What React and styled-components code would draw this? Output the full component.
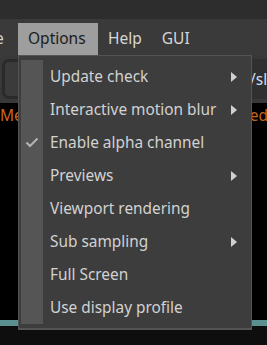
import React from 'react';
import styled, { createGlobalStyle } from 'styled-components';

const GlobalStyle = createGlobalStyle`
  html, body {
    margin: 0;
    padding: 0;
    background: #0e0e0e;
  }
  body {
    font-family: "Noto Sans", "Open Sans", sans-serif;
  }
`;

const Screen = styled.div`
  position: relative;
  width: 267px;
  height: 345px;
  overflow: hidden;
  display: flex;
  flex-direction: column;
  background: #0e0e0e;
`;

const TitleStrip = styled.div`
  height: 19px;
  background: #2d2d2d;
`;

const MenuBar = styled.div`
  height: 36px;
  background: #3a3a3a;
  display: flex;
  align-items: stretch;
  margin-left: -31px;
`;

const MenuTitle = styled.div`
  box-sizing: border-box;
  display: flex;
  align-items: center;
  padding: 0 10px 3px;
  margin-top: 4px;
  font-size: 15.5px;
  color: ${p => (p.$open ? '#1c1c1c' : '#d6d6d6')};
  background: ${p => (p.$open ? '#9e9e9e' : 'transparent')};
  width: ${p => (p.$w ? `${p.$w}px` : 'auto')};
`;

const Toolbar = styled.div`
  height: 48px;
  background: #383838;
  display: flex;
  align-items: center;
  gap: 8px;
  padding: 0 0 0 2px;
`;

const ToolButton = styled.div`
  width: 110px;
  height: 34px;
  border: 3px solid #2a2a2a;
  border-radius: 7px;
  background: #3b3b3b;
`;

const PathField = styled.div`
  flex: 1;
  height: 40px;
  background: #303030;
  display: flex;
  align-items: center;
  padding-left: 124px;
  white-space: nowrap;
  overflow: hidden;
  font-size: 15.5px;
  color: #d4dcef;
`;

const Console = styled.div`
  flex: 1;
  background: #000;
  display: flex;
  justify-content: space-between;
  padding-top: 1px;
  font-size: 15.5px;
  color: #c9661a;
  white-space: nowrap;
  overflow: hidden;
`;

const LogText = styled.span`
  margin-right: ${p => p.$tail || 0}px;
`;

const StatusLine = styled.div`
  height: 6px;
  background: #5a9090;
`;

const BottomBar = styled.div`
  height: 19px;
  background: #0e0e0e;
`;

const Dropdown = styled.div`
  position: absolute;
  left: 18px;
  top: 55px;
  width: 228px;
  padding: 4px 2px 4px 2px;
  background: #3d3d3d;
  border: 1px solid #545454;
  border-bottom-width: 2px;
`;

const Item = styled.div`
  display: grid;
  grid-template-columns: 22px 1fr 24px;
  height: 33px;
  align-items: stretch;
  font-size: 15.4px;
  color: #d2d2d2;
`;

const Gutter = styled.div`
  background: #555;
  display: flex;
  align-items: center;
  justify-content: center;
`;

const Label = styled.div`
  display: flex;
  align-items: center;
  padding-left: 7px;
  padding-bottom: 1px;
  white-space: nowrap;
`;

const ArrowCell = styled.div`
  display: flex;
  align-items: center;
  padding-left: 6px;
`;

const Arrow = () => (
  <svg width="6" height="10" viewBox="0 0 6 10">
    <path d="M0 0 L6 5 L0 10 Z" fill="#d0d0d0" />
  </svg>
);

const Check = () => (
  <svg width="14" height="11" viewBox="0 0 14 11">
    <path d="M1.5 5.5 L5 9 L12.5 1.5" fill="none" stroke="#b4b4b4" strokeWidth="2" />
  </svg>
);

const items = [
  { label: 'Update check', sub: true },
  { label: 'Interactive motion blur', sub: true },
  { label: 'Enable alpha channel', checked: true },
  { label: 'Previews', sub: true },
  { label: 'Viewport rendering' },
  { label: 'Sub sampling', sub: true },
  { label: 'Full Screen' },
  { label: 'Use display profile' },
];

export default function App() {
  return (
    <Screen>
      <GlobalStyle />
      <TitleStrip />
      <MenuBar>
        <MenuTitle $w={49}>File</MenuTitle>
        <MenuTitle $w={80} $open>Options</MenuTitle>
        <MenuTitle>Help</MenuTitle>
        <MenuTitle>GUI</MenuTitle>
      </MenuBar>
      <Toolbar>
        <ToolButton />
        <PathField>/slate/render</PathField>
      </Toolbar>
      <Console>
        <LogText>Messages</LogText>
        <LogText $tail={-1}>loaded</LogText>
      </Console>
      <StatusLine />
      <BottomBar />

      <Dropdown>
        {items.map(item => (
          <Item key={item.label}>
            <Gutter>{item.checked && <Check />}</Gutter>
            <Label>{item.label}</Label>
            <ArrowCell>{item.sub && <Arrow />}</ArrowCell>
          </Item>
        ))}
      </Dropdown>
    </Screen>
  );
}
